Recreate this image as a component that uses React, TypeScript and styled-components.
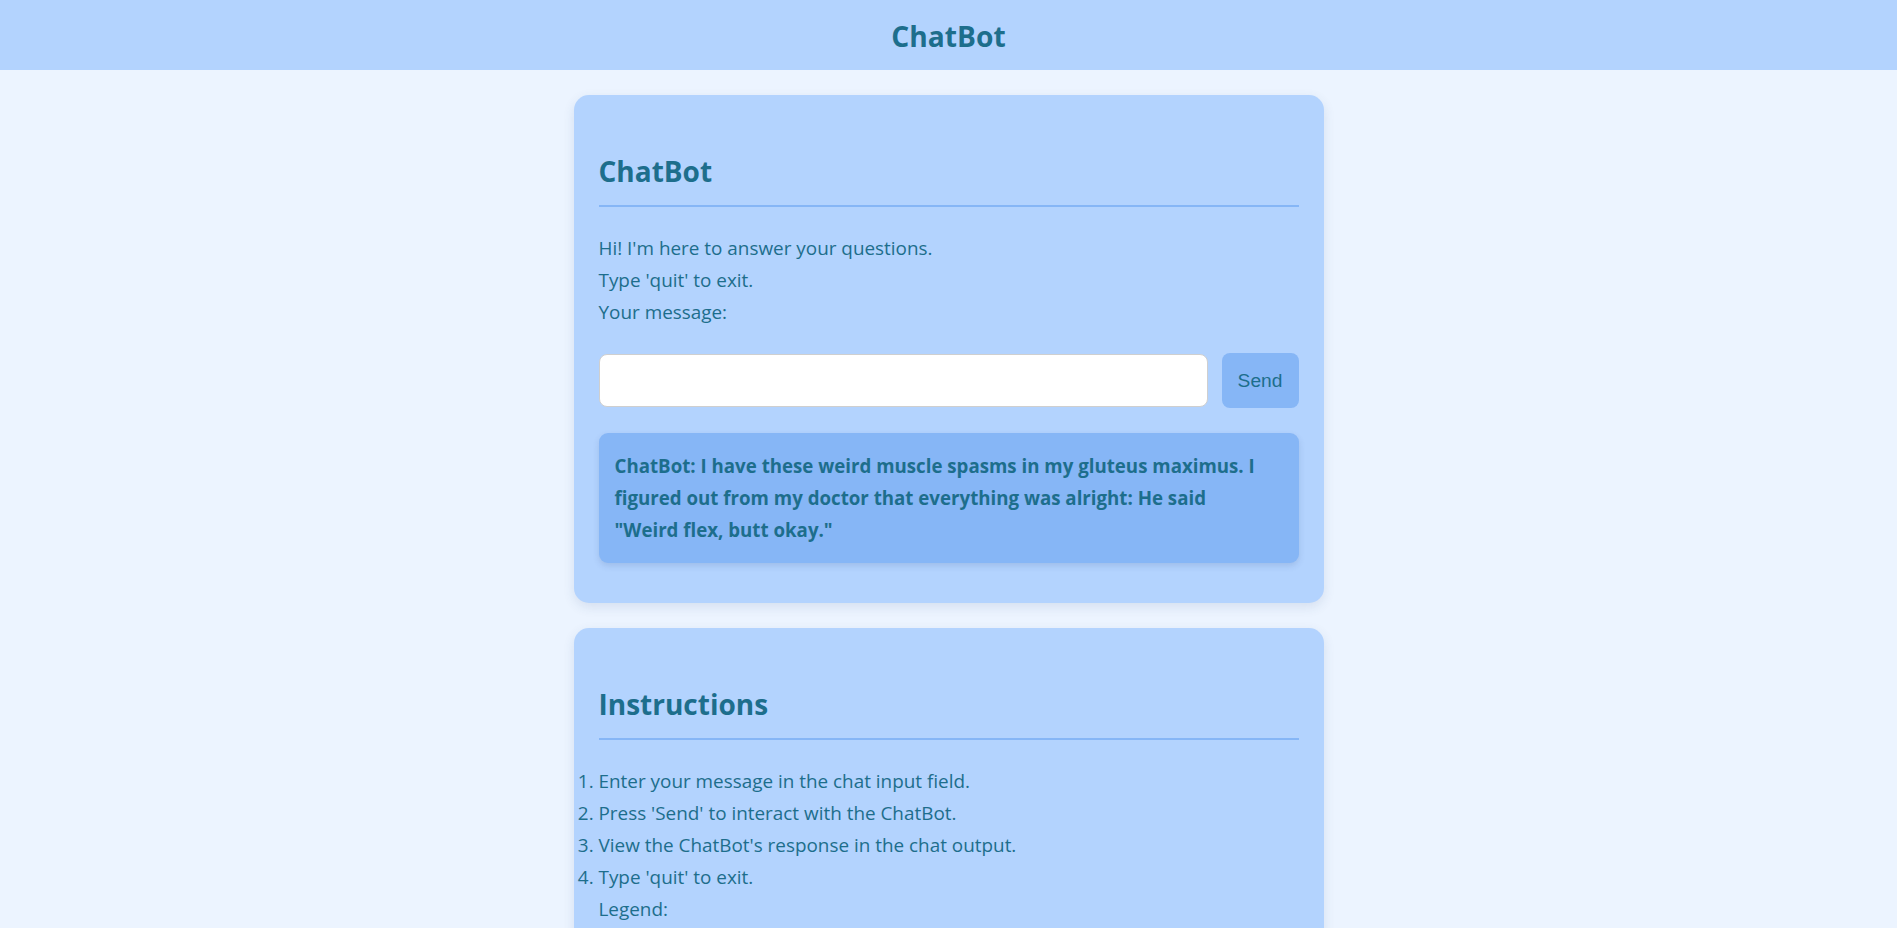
import React from "react";
import styled, { createGlobalStyle } from "styled-components";

const TEAL = "#1d6e8c";
const PANEL = "#b3d3fe";
const ACCENT = "#86b6f6";

const GlobalStyle = createGlobalStyle`
  html, body {
    margin: 0;
    padding: 0;
  }
  body {
    background: #ecf4ff;
    font-family: "Open Sans", "Noto Sans", sans-serif;
    color: ${TEAL};
  }
  * { box-sizing: border-box; }
`;

const Header = styled.header`
  height: 70px;
  background: ${PANEL};
  display: flex;
  align-items: center;
  justify-content: center;
`;

const HeaderTitle = styled.h1`
  margin: 0;
  font-size: 28.2px;
  font-weight: 700;
  color: ${TEAL};
  line-height: 1;
  padding-top: 2px;
`;

const Main = styled.main`
  display: flex;
  flex-direction: column;
  align-items: center;
  gap: 25px;
  padding: 25px 0;
`;

const Card = styled.section`
  width: 750px;
  padding: 25px;
  background: ${PANEL};
  border-radius: 15px;
  box-shadow: 0 4px 12px rgba(40, 70, 120, 0.12);
`;

const CardTitle = styled.h2`
  margin: 32px 0 0;
  padding-bottom: 15px;
  font-size: 28px;
  line-height: 38px;
  font-weight: 700;
  color: ${TEAL};
  border-bottom: 2px solid ${ACCENT};
`;

const TextBlock = styled.div`
  margin-top: 25px;
  font-size: 18.9px;
  line-height: 32px;
`;

const Line = styled.p`
  margin: 0;
`;

const InputRow = styled.div`
  margin-top: 25px;
  display: flex;
  align-items: center;
  gap: 14px;
`;

const MessageInput = styled.input`
  flex: 1;
  height: 53px;
  border: 1px solid #cfcfcf;
  border-radius: 8px;
  background: #fff;
  padding: 0 14px;
  font-size: 18px;
  outline: none;
`;

const SendButton = styled.button`
  width: 77px;
  height: 55px;
  border: none;
  border-radius: 8px;
  background: ${ACCENT};
  color: ${TEAL};
  font-family: "Liberation Sans", Arial, sans-serif;
  font-size: 19.2px;
  cursor: pointer;
`;

const ChatOutput = styled.div`
  margin: 25px 0 15px;
  padding: 17px 16px;
  background: ${ACCENT};
  border-radius: 9px;
  box-shadow: 0 3px 6px rgba(40, 70, 120, 0.15);
  font-size: 18.7px;
  font-weight: 700;
  line-height: 32px;
`;

const StepList = styled.ol`
  margin: 25px 0 0;
  padding: 0;
  font-size: 18.9px;
  line-height: 32px;
`;

const Step = styled.li`
  margin: 0;
`;

const Legend = styled.p`
  margin: 0;
  font-size: 18.9px;
  line-height: 32px;
`;

export default function App() {
  return (
    <>
      <GlobalStyle />
      <Header>
        <HeaderTitle>ChatBot</HeaderTitle>
      </Header>
      <Main>
        <Card>
          <CardTitle>ChatBot</CardTitle>
          <TextBlock>
            <Line>Hi! I'm here to answer your questions.</Line>
            <Line>Type 'quit' to exit.</Line>
            <Line>Your message:</Line>
          </TextBlock>
          <InputRow>
            <MessageInput type="text" />
            <SendButton>Send</SendButton>
          </InputRow>
          <ChatOutput>
            ChatBot: I have these weird muscle spasms in my gluteus maximus. I
            <br />
            figured out from my doctor that everything was alright: He said
            <br />
            "Weird flex, butt okay."
          </ChatOutput>
        </Card>
        <Card>
          <CardTitle>Instructions</CardTitle>
          <StepList>
            <Step>Enter your message in the chat input field.</Step>
            <Step>Press 'Send' to interact with the ChatBot.</Step>
            <Step>View the ChatBot's response in the chat output.</Step>
            <Step>Type 'quit' to exit.</Step>
          </StepList>
          <Legend>Legend:</Legend>
        </Card>
      </Main>
    </>
  );
}
